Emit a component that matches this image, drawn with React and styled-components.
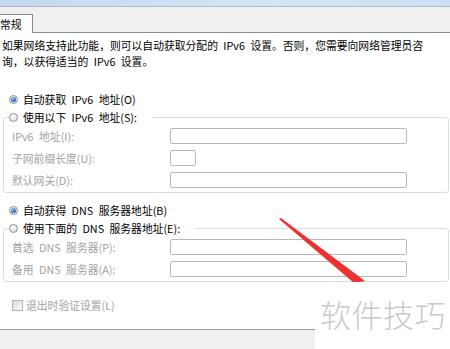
import React from 'react';
import styled, { createGlobalStyle, css } from 'styled-components';

const GlobalStyle = createGlobalStyle`
    html, body {
        margin: 0;
        padding: 0;
        background: #fff;
    }
    body {
        width: 450px;
        height: 349px;
        overflow: hidden;
        font-family: "Noto Sans CJK SC", "Liberation Sans", sans-serif;
        font-size: 10.8px;
        color: #000;
    }
`;

const StyledWindow = styled.div`
    position: relative;
    width: 450px;
    height: 349px;
    display: flex;
    flex-direction: column;
    overflow: hidden;
`;
const StyledTitleStrip = styled.div`
    height: 6px;
    background: linear-gradient(to right, #c3d8ee, #d6e5f4 60%, #cddff1);
    border-bottom: 1px solid #a9bdd3;
`;
const StyledTabBar = styled.div`
    height: 25px;
    display: flex;
    align-items: flex-end;
    background: #f0f0f0;
    border-bottom: 1px solid #898c95;
`;
const StyledTab = styled.div`
    width: 33px;
    height: 19px;
    margin-bottom: -1px;
    padding-top: 3px;
    box-sizing: border-box;
    background: #fff;
    border-right: 1px solid #898c95;
    border-top: 1px solid #898c95;
    line-height: 13px;
    white-space: nowrap;
`;
const StyledPanel = styled.div`
    height: 296px;
    box-sizing: border-box;
    padding: 5px 1px 0 3px;
    background: #fff;
    display: flex;
    flex-direction: column;
`;
const StyledIntro = styled.p`
    margin: 0 0 0 -1px;
    line-height: 15.6px;
    white-space: nowrap;
    word-spacing: 3px;
`;
const StyledOption = styled.label`
    display: flex;
    align-items: center;
    gap: 5px;
    height: 18px;
    margin-left: 6px;
    white-space: nowrap;
    word-spacing: 3px;
    ${props => props.first && css`
        margin-top: 21px;
    `}
    ${props => props.spaced && css`
        margin-top: 8px;
    `}
`;
const StyledRadio = styled.span`
    position: relative;
    width: 9px;
    height: 9px;
    flex: none;
    border-radius: 50%;
    box-sizing: border-box;
    border: 1px solid #8e8f8f;
    background: radial-gradient(circle at 40% 35%, #fdfdfd, #d9d9d9);
    ${props => props.checked && css`
        &::after {
            content: '';
            position: absolute;
            left: 1px;
            top: 1px;
            width: 5px;
            height: 5px;
            border-radius: 50%;
            background: radial-gradient(circle at 40% 35%, #8cc5f7, #1d5fb8 70%);
        }
    `}
`;
const StyledGroup = styled.fieldset`
    margin: 0;
    min-width: 0;
    padding: 2px 4px 4px 5px;
    border: 1px solid #d5dfe5;
    border-radius: 3px;
    display: flex;
    flex-direction: column;
    gap: 6px;
`;
const StyledLegend = styled.legend`
    padding: 0 16px 0 0;
    margin-left: 0;
    background: #fff;
    & > label {
        margin-left: 0;
    }
`;
const StyledField = styled.div`
    display: grid;
    grid-template-columns: 158px auto;
    align-items: center;
    margin-left: 3px;
    height: 16px;
`;
const StyledFieldLabel = styled.span`
    color: #a3a3a3;
    white-space: nowrap;
    word-spacing: 3px;
`;
const StyledInput = styled.div`
    width: ${props => props.short ? '26px' : '237px'};
    height: 16px;
    box-sizing: border-box;
    border: 1px solid #b9b9b9;
    border-radius: 2px;
    background: #fff;
`;
const StyledCheckRow = styled.label`
    display: flex;
    align-items: center;
    gap: 3px;
    height: 18px;
    margin: 14px 0 0 9px;
    color: #a3a3a3;
`;
const StyledCheckbox = styled.span`
    width: 11px;
    height: 11px;
    flex: none;
    box-sizing: border-box;
    border: 1px solid #b4b4b4;
    background: linear-gradient(135deg, #dcdcdc, #f8f8f8);
`;
const StyledFooter = styled.div`
    flex: 1;
    background: #f0f0f0;
    border-top: 1px solid #a0a0a0;
`;
const StyledArrow = styled.svg`
    position: absolute;
    left: 0;
    top: 0;
    pointer-events: none;
`;
const StyledWatermark = styled.div`
    position: absolute;
    left: 315px;
    top: 282px;
    width: 135px;
    height: 67px;
    box-sizing: border-box;
    padding: 14px 0 0 5px;
    background: #fff;
    color: #cacaca;
    font-size: 31px;
    font-weight: 300;
    line-height: 36px;
    letter-spacing: 0.5px;
    white-space: nowrap;
`;

function Option({ checked, first, spaced, children }) {
    return (
        <StyledOption first={first} spaced={spaced}>
            <StyledRadio checked={checked} />
            <span>{children}</span>
        </StyledOption>
    );
}

function Field({ label, short }) {
    return (
        <StyledField>
            <StyledFieldLabel>{label}</StyledFieldLabel>
            <StyledInput short={short} />
        </StyledField>
    );
}

export default function App() {
    return (
        <StyledWindow>
            <GlobalStyle />
            <StyledTitleStrip />
            <StyledTabBar>
                <StyledTab>常规</StyledTab>
            </StyledTabBar>
            <StyledPanel>
                <StyledIntro>
                    如果网络支持此功能，则可以自动获取分配的 IPv6 设置。否则，您需要向网络管理员咨<br />
                    询，以获得适当的 IPv6 设置。
                </StyledIntro>

                <Option checked first>自动获取 IPv6 地址(O)</Option>
                <StyledGroup>
                    <StyledLegend>
                        <Option>使用以下 IPv6 地址(S):</Option>
                    </StyledLegend>
                    <Field label='IPv6 地址(I):' />
                    <Field label='子网前缀长度(U):' short />
                    <Field label='默认网关(D):' />
                </StyledGroup>

                <Option checked spaced>自动获得 DNS 服务器地址(B)</Option>
                <StyledGroup>
                    <StyledLegend>
                        <Option>使用下面的 DNS 服务器地址(E):</Option>
                    </StyledLegend>
                    <Field label='首选 DNS 服务器(P):' />
                    <Field label='备用 DNS 服务器(A):' />
                </StyledGroup>

                <StyledCheckRow>
                    <StyledCheckbox />
                    <span>退出时验证设置(L)</span>
                </StyledCheckRow>
            </StyledPanel>
            <StyledFooter />

            <StyledArrow width='450' height='349' viewBox='0 0 450 349'>
                <polygon points='279,219 281,218 365,281 354,283' fill='#ec3230' />
            </StyledArrow>
            <StyledWatermark>软件技巧</StyledWatermark>
        </StyledWindow>
    );
}
